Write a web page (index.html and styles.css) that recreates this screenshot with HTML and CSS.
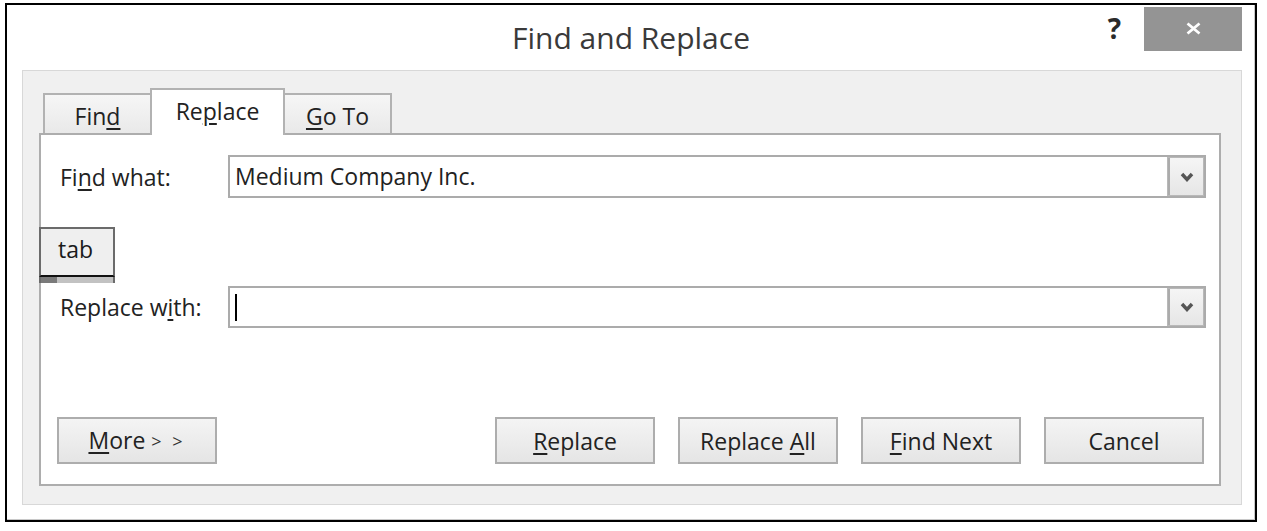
FILE: index.html
```html
<!DOCTYPE html>
<html lang="en">
<head>
<meta charset="utf-8">
<title>Find and Replace</title>
<link rel="stylesheet" href="styles.css">
</head>
<body>
<div class="window">
  <div class="titlebar">
    <div class="spacer"></div>
    <div class="title">Find and Replace</div>
    <div class="controls">
      <span class="help">?</span>
      <span class="close">
        <svg width="15" height="13" viewBox="0 0 15 13"><path d="M1.5 1.5 L13.5 11.5 M13.5 1.5 L1.5 11.5" stroke="#fff" stroke-width="2.8" fill="none"/></svg>
      </span>
    </div>
  </div>
  <div class="panel">
    <div class="tabs">
      <div class="tab">Fin<u>d</u></div>
      <div class="tab active">Re<u>p</u>lace</div>
      <div class="tab"><u>G</u>o To</div>
    </div>
    <div class="content">
      <div class="row row-find">
        <label class="label">Fi<u>n</u>d what:</label>
        <div class="combo">
          <span class="value">Medium Company Inc.</span>
          <span class="drop"><svg class="chev" width="14" height="10" viewBox="0 0 14 10"><polyline points="2,2 7,7.5 12,2" stroke="#555" stroke-width="3.4" fill="none"/></svg></span>
        </div>
      </div>
      <div class="row row-replace">
        <label class="label">Replace w<u>i</u>th:</label>
        <div class="combo">
          <span class="value"><span class="caret"></span></span>
          <span class="drop"><svg class="chev" width="14" height="10" viewBox="0 0 14 10"><polyline points="2,2 7,7.5 12,2" stroke="#555" stroke-width="3.4" fill="none"/></svg></span>
        </div>
      </div>
      <div class="buttons">
        <button class="btn btn-more"><u>M</u>ore <span class="arrows">&gt; &gt;</span></button>
        <div class="btn-group">
          <button class="btn"><u>R</u>eplace</button>
          <button class="btn">Replace <u>A</u>ll</button>
          <button class="btn"><u>F</u>ind Next</button>
          <button class="btn">Cancel</button>
        </div>
      </div>
      <div class="keytip">
        <div class="keytip-body">tab</div>
        <div class="keytip-bar"></div>
      </div>
    </div>
  </div>
</div>
</body>
</html>
```
FILE: styles.css
```css
* { box-sizing: border-box; }
html, body { margin: 0; padding: 0; background: #fff; }
body {
  font-family: "Open Sans", "Noto Sans", sans-serif;
  color: #222;
}
u { text-decoration: underline; text-decoration-thickness: 2px; text-underline-offset: 3px; }

.window {
  margin: 3px 0 0 5px;
  width: 1252px;
  height: 519px;
  border: 2px solid #000;
  background: #fff;
  box-shadow: inset -1px -1px 0 #c8c8c8;
}

.titlebar {
  height: 65px;
  display: grid;
  grid-template-columns: 1fr auto 1fr;
}
.title {
  font-size: 30px;
  line-height: 40px;
  padding-top: 13px;
  color: #3a3a3a;
}
.controls {
  justify-self: end;
  display: flex;
  align-items: flex-start;
  margin-right: 13px;
}
.help {
  font-size: 28px;
  font-weight: 700;
  line-height: 28px;
  margin-top: 9px;
  margin-right: 23px;
  color: #2a2a2a;
}
.close {
  margin-top: 2px;
  width: 98px;
  height: 44px;
  background: #949494;
  display: flex;
  align-items: center;
  justify-content: center;
  padding-bottom: 2px;
}

.panel {
  margin: 0 13px 0 15px;
  height: 435px;
  border: 1px solid #d8d8d8;
  background: #f0f0f0;
  padding: 17px 20px 0 16px;
}

.tabs {
  display: flex;
  align-items: flex-end;
  height: 45px;
  margin-left: 4px;
  position: relative;
  z-index: 1;
}
.tab {
  height: 40px;
  width: 109px;
  border: 2px solid #b2b2b2;
  border-bottom: 0;
  background: linear-gradient(#f6f6f6, #e9e9e9);
  font-size: 23px;
  line-height: 30px;
  padding-top: 6px;
  text-align: center;
  color: #222;
}
.tab + .tab { margin-left: -2px; }
.tab.active {
  width: 135px;
  height: 47px;
  margin-bottom: -2px;
  background: #fff;
  padding-top: 6px;
  position: relative;
  z-index: 2;
}

.content {
  position: relative;
  height: 353px;
  border: 2px solid #adadad;
  background: #fff;
  padding: 20px 15px 20px 16px;
}

.row {
  display: flex;
  align-items: center;
  margin-right: -2px;
  padding-left: 3px;
}
.row-replace { margin-top: 88px; }
.label {
  width: 168px;
  font-size: 23px;
  line-height: 30px;
  color: #222;
}
.combo {
  flex: 1;
  height: 43px;
  border: 2px solid #ababab;
  background: #fff;
  display: flex;
  align-items: stretch;
}
.row-replace .combo { height: 42px; }
.value {
  flex: 1;
  padding-left: 5px;
  font-size: 23px;
  line-height: 39px;
  color: #222;
  display: flex;
  align-items: center;
}
.caret {
  display: block;
  width: 2px;
  height: 27px;
  background: #000;
}
.drop {
  width: 35px;
  margin: 1px 1px 1px 0;
  border-left: 2px solid #ababab;
  box-shadow: 0 0 0 1px #b8b8b8;
  background: linear-gradient(#f5f5f5, #e6e6e6);
  display: flex;
  align-items: center;
  justify-content: center;
}
.chev { display: block; }

.buttons {
  margin-top: 89px;
  display: flex;
  justify-content: space-between;
}
.btn-group {
  display: flex;
  gap: 23px;
}
.btn {
  width: 160px;
  height: 47px;
  border: 2px solid #adadad;
  background: linear-gradient(#f4f4f4, #e5e5e5);
  font-family: "Open Sans", "Noto Sans", sans-serif;
  font-size: 23px;
  line-height: 30px;
  color: #222;
  padding: 0;
  margin: 0;
}
.arrows {
  font-size: 18px;
  letter-spacing: 3px;
  vertical-align: 1px;
  color: #333;
}

.keytip {
  position: absolute;
  left: -2px;
  top: 92px;
  width: 76px;
}
.keytip-body {
  height: 50px;
  border: 2px solid #6b6b6b;
  border-bottom: 2px solid #111;
  background: #efefef;
  font-size: 23px;
  line-height: 30px;
  padding: 5px 0 0 17px;
  color: #1a1a1a;
}
.keytip-bar {
  height: 6px;
  border: 2px solid #6b6b6b;
  border-top: 0;
  border-bottom: 0;
  background: linear-gradient(to right, #7a7a7a 16px, #c2c2c2 16px);
}
```
